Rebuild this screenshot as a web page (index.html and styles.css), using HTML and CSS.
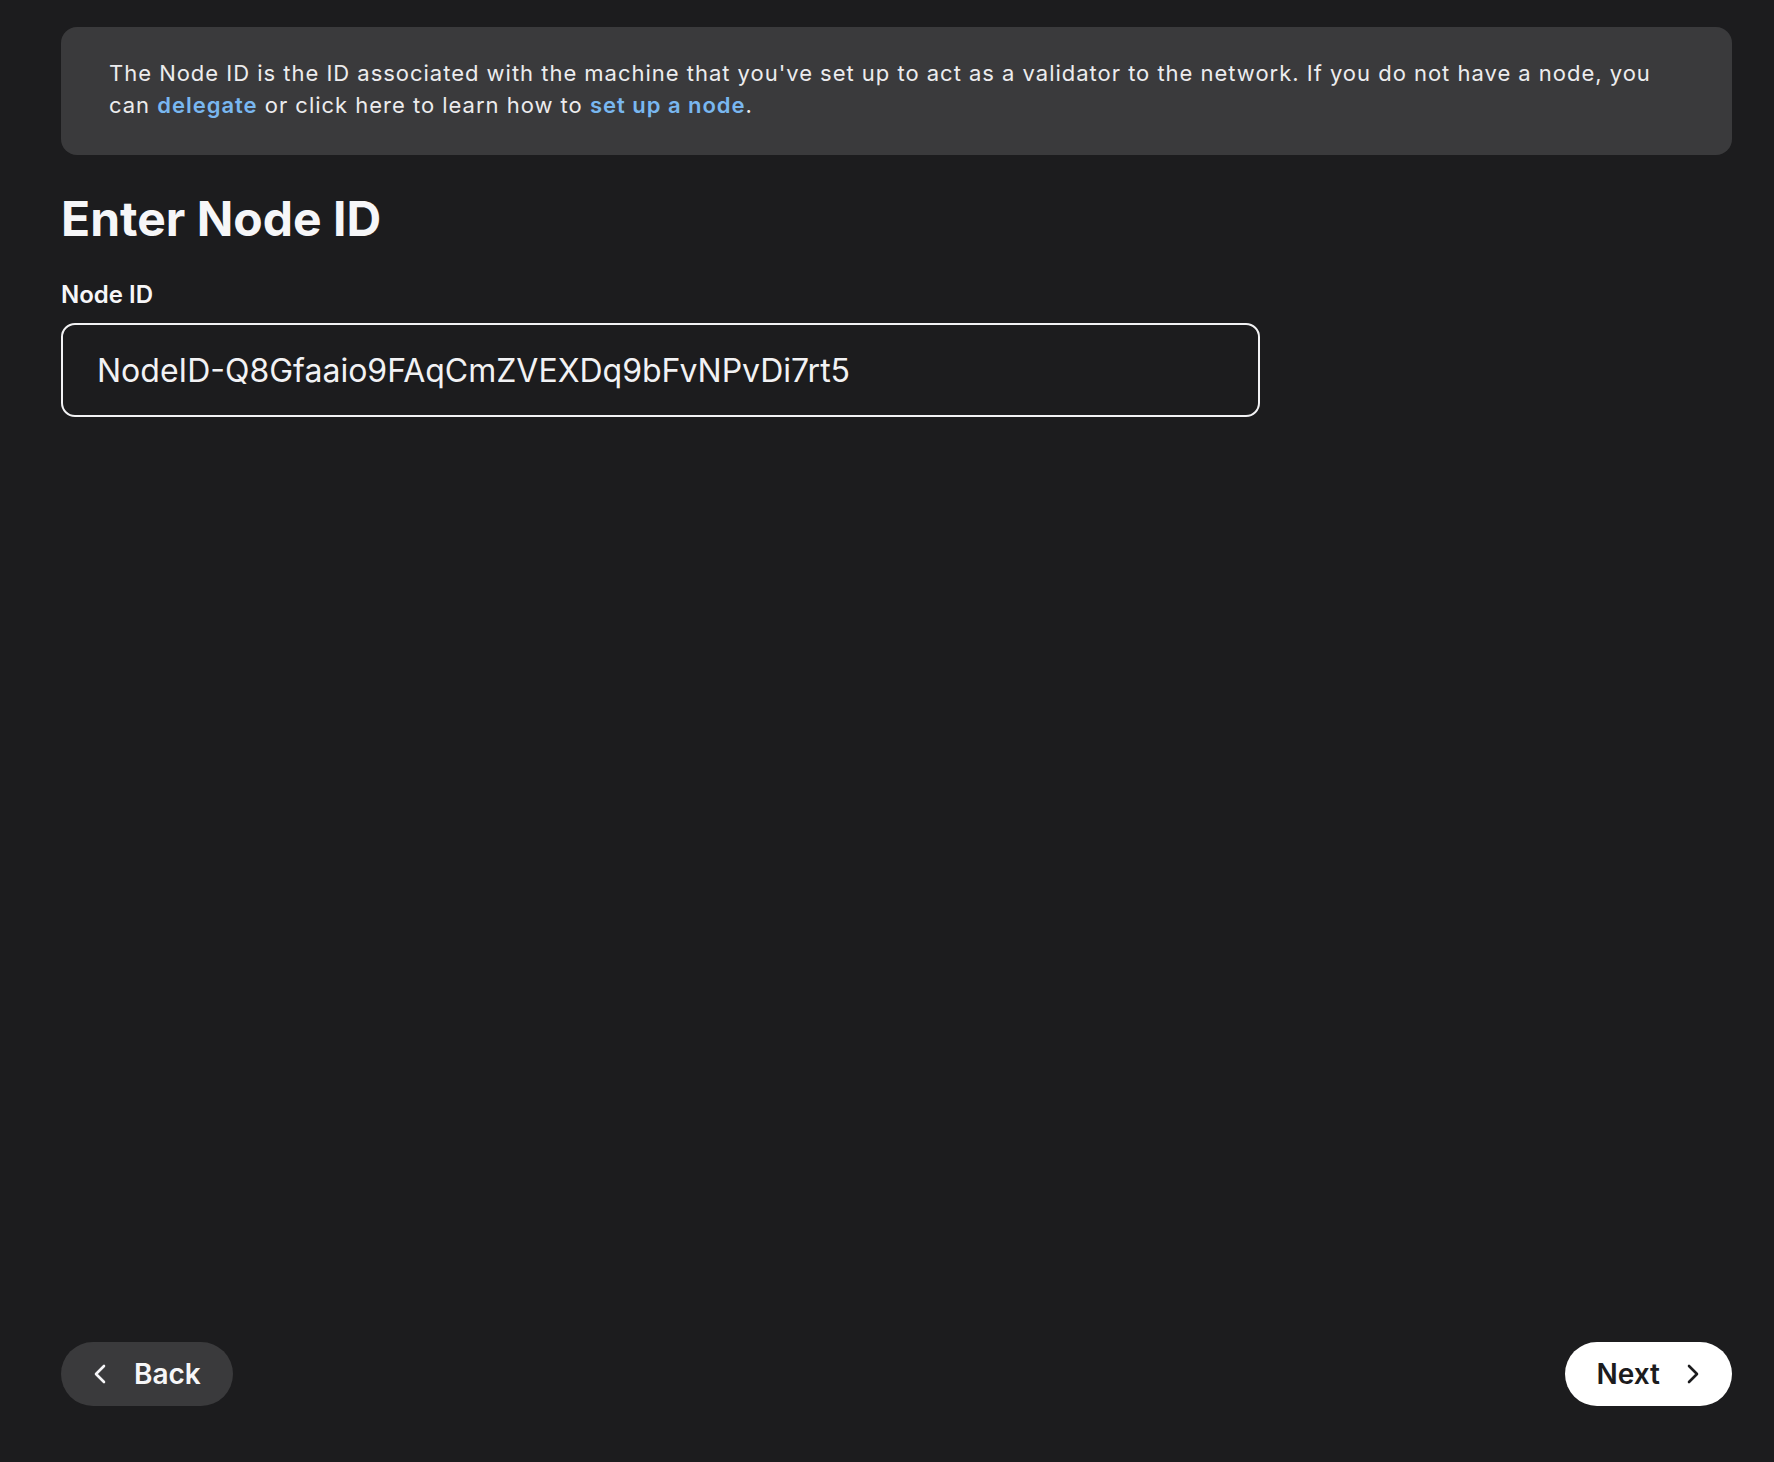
FILE: index.html
```html
<!DOCTYPE html>
<html lang="en">
<head>
<meta charset="utf-8">
<title>Enter Node ID</title>
<link rel="stylesheet" href="styles.css">
</head>
<body>
<div class="page">
  <div class="notice">
    The Node ID is the ID associated with the machine that you've set up to act as a validator to the network. If you do not have a node, you can <a class="link" href="#">delegate</a> or click here to learn how to <a class="link" href="#">set up a node</a>.
  </div>
  <h1 class="title">Enter Node ID</h1>
  <label class="field-label" for="node">Node ID</label>
  <div class="input-box">
    <span class="input-value">NodeID-Q8Gfaaio9FAqCmZVEXDq9bFvNPvDi7rt5</span>
  </div>
  <div class="actions">
    <button class="btn btn-back">
      <svg class="chev" width="14" height="22" viewBox="0 0 14 22"><path d="M11 3 L3 11 L11 19" fill="none" stroke="currentColor" stroke-width="2.6" stroke-linecap="round" stroke-linejoin="round"/></svg>
      <span>Back</span>
    </button>
    <button class="btn btn-next">
      <span>Next</span>
      <svg class="chev" width="14" height="22" viewBox="0 0 14 22"><path d="M3 3 L11 11 L3 19" fill="none" stroke="currentColor" stroke-width="2.6" stroke-linecap="round" stroke-linejoin="round"/></svg>
    </button>
  </div>
</div>
</body>
</html>
```

FILE: styles.css
```css
* { box-sizing: border-box; }
html, body {
  margin: 0;
  padding: 0;
  background: #1c1c1e;
  height: 100%;
}
body {
  font-family: Inter, "Noto Sans", sans-serif;
  color: #f4f4f5;
}
.page {
  height: 100vh;
  display: flex;
  flex-direction: column;
  padding: 27px 42px 56px 61px;
}
.notice {
  background: #3a3a3c;
  border-radius: 16px;
  padding: 30px 48px 34px;
  font-size: 22px;
  line-height: 32px;
  color: #ececee;
  letter-spacing: 0.98px;
}
.link {
  color: #79b7f0;
  font-weight: 600;
  text-decoration: none;
}
.title {
  margin: 35px 0 0;
  font-size: 48px;
  line-height: 58px;
  font-weight: 700;
  color: #f6f6f8;
}
.field-label {
  display: block;
  margin-top: 33px;
  font-size: 24px;
  line-height: 28px;
  font-weight: 600;
  color: #f6f6f8;
}
.input-box {
  margin-top: 14px;
  width: 1199px;
  height: 94px;
  border: 2px solid #f2f2f4;
  border-radius: 14px;
  display: flex;
  align-items: center;
  padding: 0 34px;
}
.input-value {
  font-size: 32px;
  font-weight: 400;
  color: #f2f2f4;
}
.actions {
  margin-top: auto;
  display: flex;
  justify-content: space-between;
  align-items: center;
}
.btn {
  height: 64px;
  border-radius: 32px;
  border: none;
  display: flex;
  align-items: center;
  font-family: Inter, "Noto Sans", sans-serif;
  font-size: 28px;
  font-weight: 600;
  cursor: pointer;
}
.btn-back {
  background: #3a3a3c;
  color: #f6f6f8;
  padding: 0 32px 0 32px;
  gap: 27px;
}
.btn-next {
  background: #ffffff;
  color: #1c1c1e;
  padding: 0 32px 0 32px;
  gap: 26px;
}
.chev { display: block; }
```
